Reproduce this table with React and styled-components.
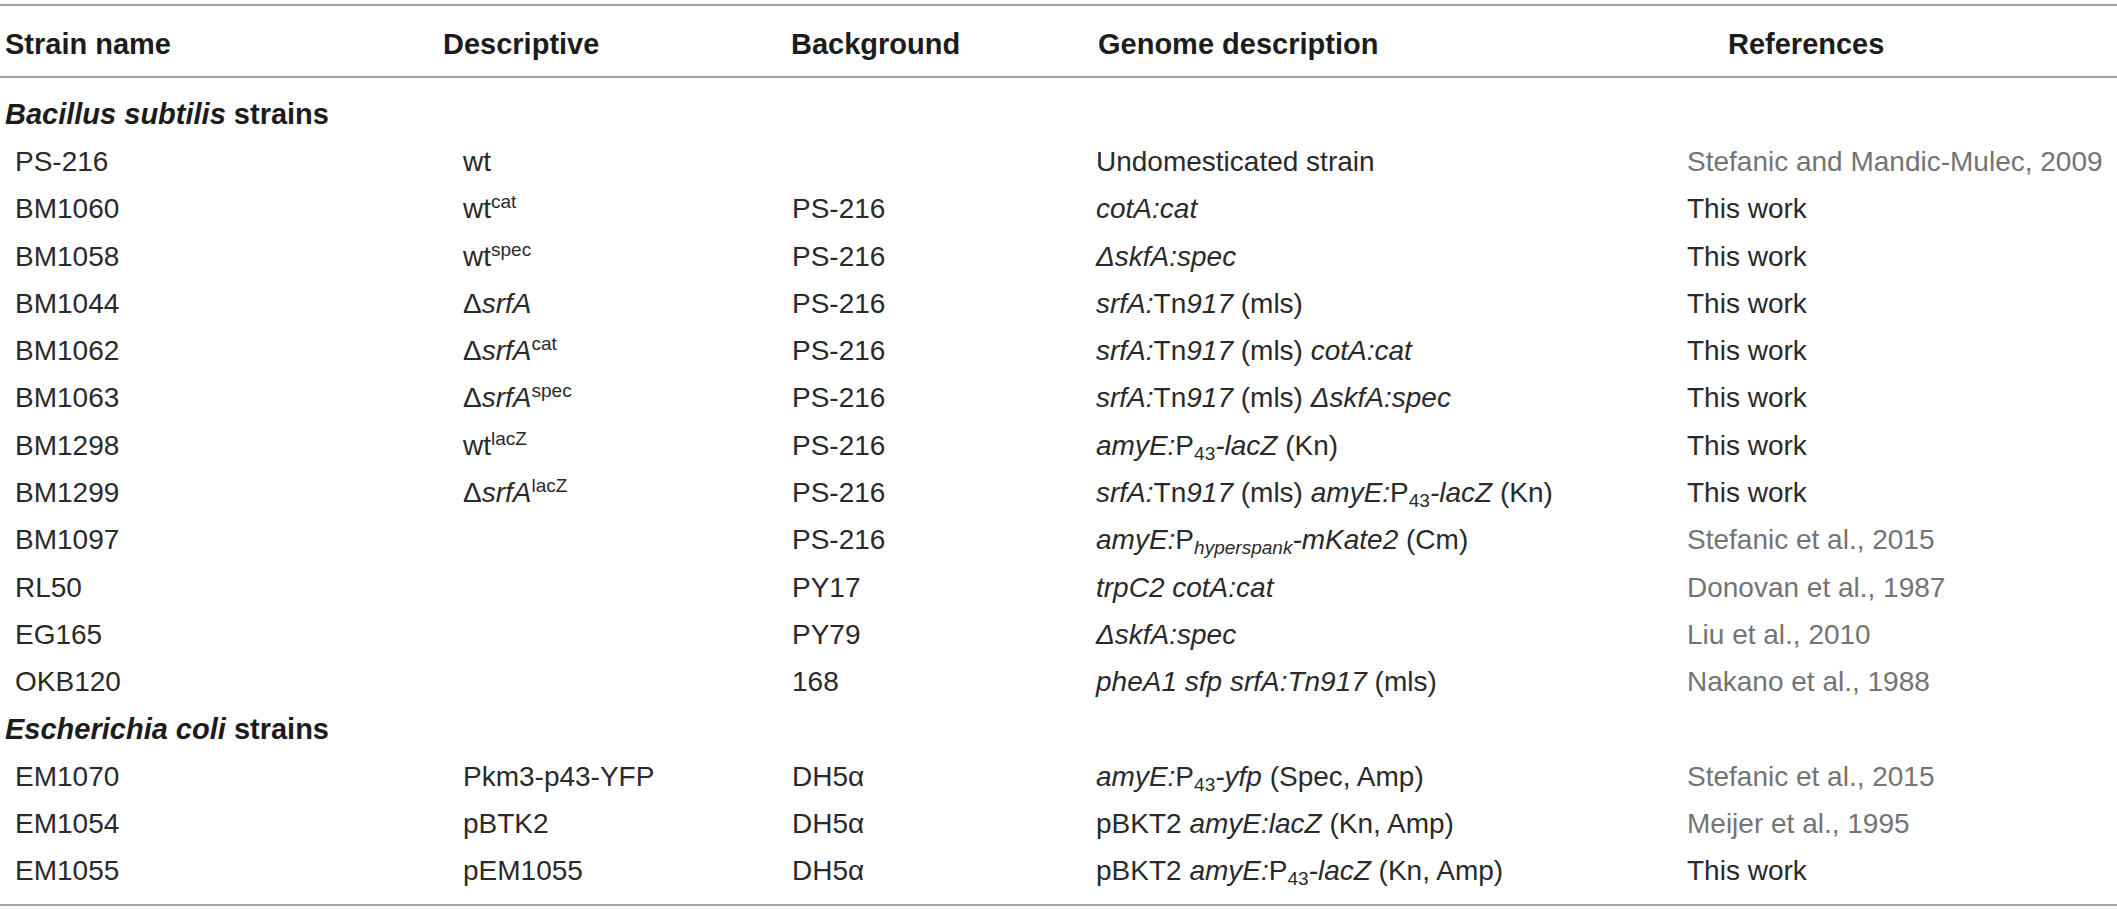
import React from 'react';
import styled, { createGlobalStyle } from 'styled-components';

const GlobalStyle = createGlobalStyle`
  html, body { margin: 0; padding: 0; background: #ffffff; }
  body { font-family: "Liberation Sans", Arial, Helvetica, sans-serif; }
`;

const COLS = '443px 348px 305px 591px 1fr';
const RULE = '2px solid #a4a4a4';

const Page = styled.div`
  width: 2117px;
  padding-top: 4px;
`;

const HeadRow = styled.div`
  display: grid;
  grid-template-columns: ${COLS};
  align-items: center;
  box-sizing: border-box;
  height: 74px;
  padding-top: 6px;
  border-top: ${RULE};
  border-bottom: ${RULE};
`;

const HeadCell = styled.div`
  font-size: 29px;
  font-weight: 700;
  color: #1c1c1c;
  line-height: 1;
  white-space: nowrap;
  padding-left: ${(p) => p.$pad || 0}px;
`;

const Body = styled.div`
  padding: 13px 0 9px;
  border-bottom: ${RULE};
`;

const GroupRow = styled.div`
  height: 47.3px;
  display: flex;
  align-items: center;
  padding-left: 5px;
  font-size: 29px;
  font-weight: 700;
  color: #1c1c1c;
  line-height: 1;
`;

const Row = styled.div`
  display: grid;
  grid-template-columns: ${COLS};
  align-items: center;
  height: 47.3px;
  font-size: 28px;
  line-height: 1;
  color: #2a2a2a;
`;

const Cell = styled.div`
  white-space: nowrap;
  padding-left: ${(p) => p.$pad || 0}px;
  color: ${(p) => (p.$muted ? '#747474' : '#2a2a2a')};
`;

const I = styled.i`
  font-style: italic;
`;

const Sup = styled.sup`
  font-size: 0.68em;
  line-height: 0;
  vertical-align: 0.55em;
`;

const Sub = styled.sub`
  font-size: 0.68em;
  line-height: 0;
  vertical-align: -0.28em;
`;

const PAD = {
  head: [5, 0, 0, 2, 41],
  data: [15, 20, 1, 0, 0],
};

const headers = ['Strain name', 'Descriptive', 'Background', 'Genome description', 'References'];

const dsrfA = (
  <>
    Δ<I>srfA</I>
  </>
);
const srfTn = (
  <>
    <I>srfA:</I>Tn<I>917</I> (mls)
  </>
);
const p43 = (
  <>
    P<Sub>43</Sub>
  </>
);

const bacillus = [
  { name: 'PS-216', desc: 'wt', bg: '', genome: 'Undomesticated strain', ref: 'Stefanic and Mandic-Mulec, 2009', muted: true },
  { name: 'BM1060', desc: <>wt<Sup>cat</Sup></>, bg: 'PS-216', genome: <I>cotA:cat</I>, ref: 'This work' },
  { name: 'BM1058', desc: <>wt<Sup>spec</Sup></>, bg: 'PS-216', genome: <I>ΔskfA:spec</I>, ref: 'This work' },
  { name: 'BM1044', desc: dsrfA, bg: 'PS-216', genome: srfTn, ref: 'This work' },
  { name: 'BM1062', desc: <>{dsrfA}<Sup>cat</Sup></>, bg: 'PS-216', genome: <>{srfTn} <I>cotA:cat</I></>, ref: 'This work' },
  { name: 'BM1063', desc: <>{dsrfA}<Sup>spec</Sup></>, bg: 'PS-216', genome: <>{srfTn} <I>ΔskfA:spec</I></>, ref: 'This work' },
  { name: 'BM1298', desc: <>wt<Sup>lacZ</Sup></>, bg: 'PS-216', genome: <><I>amyE:</I>{p43}<I>-lacZ</I> (Kn)</>, ref: 'This work' },
  { name: 'BM1299', desc: <>{dsrfA}<Sup>lacZ</Sup></>, bg: 'PS-216', genome: <>{srfTn} <I>amyE:</I>{p43}<I>-lacZ</I> (Kn)</>, ref: 'This work' },
  { name: 'BM1097', desc: '', bg: 'PS-216', genome: <><I>amyE:</I>P<Sub><I>hyperspank</I></Sub><I>-mKate2</I> (Cm)</>, ref: 'Stefanic et al., 2015', muted: true },
  { name: 'RL50', desc: '', bg: 'PY17', genome: <I>trpC2 cotA:cat</I>, ref: 'Donovan et al., 1987', muted: true },
  { name: 'EG165', desc: '', bg: 'PY79', genome: <I>ΔskfA:spec</I>, ref: 'Liu et al., 2010', muted: true },
  { name: 'OKB120', desc: '', bg: '168', genome: <><I>pheA1 sfp srfA:Tn917</I> (mls)</>, ref: 'Nakano et al., 1988', muted: true },
];

const ecoli = [
  { name: 'EM1070', desc: 'Pkm3-p43-YFP', bg: 'DH5α', genome: <><I>amyE:</I>{p43}<I>-yfp</I> (Spec, Amp)</>, ref: 'Stefanic et al., 2015', muted: true },
  { name: 'EM1054', desc: 'pBTK2', bg: 'DH5α', genome: <>pBKT2 <I>amyE:lacZ</I> (Kn, Amp)</>, ref: 'Meijer et al., 1995', muted: true },
  { name: 'EM1055', desc: 'pEM1055', bg: 'DH5α', genome: <>pBKT2 <I>amyE:</I>{p43}<I>-lacZ</I> (Kn, Amp)</>, ref: 'This work' },
];

function StrainRow({ s }) {
  const vals = [s.name, s.desc, s.bg, s.genome, s.ref];
  return (
    <Row>
      {vals.map((v, i) => (
        <Cell key={i} $pad={PAD.data[i]} $muted={i === 4 && s.muted}>
          {v}
        </Cell>
      ))}
    </Row>
  );
}

export default function App() {
  return (
    <>
      <GlobalStyle />
      <Page>
        <HeadRow>
          {headers.map((h, i) => (
            <HeadCell key={h} $pad={PAD.head[i]}>
              {h}
            </HeadCell>
          ))}
        </HeadRow>
        <Body>
          <GroupRow>
            <I>Bacillus subtilis</I>&nbsp;strains
          </GroupRow>
          {bacillus.map((s) => (
            <StrainRow key={s.name} s={s} />
          ))}
          <GroupRow>
            <I>Escherichia coli</I>&nbsp;strains
          </GroupRow>
          {ecoli.map((s) => (
            <StrainRow key={s.name} s={s} />
          ))}
        </Body>
      </Page>
    </>
  );
}
